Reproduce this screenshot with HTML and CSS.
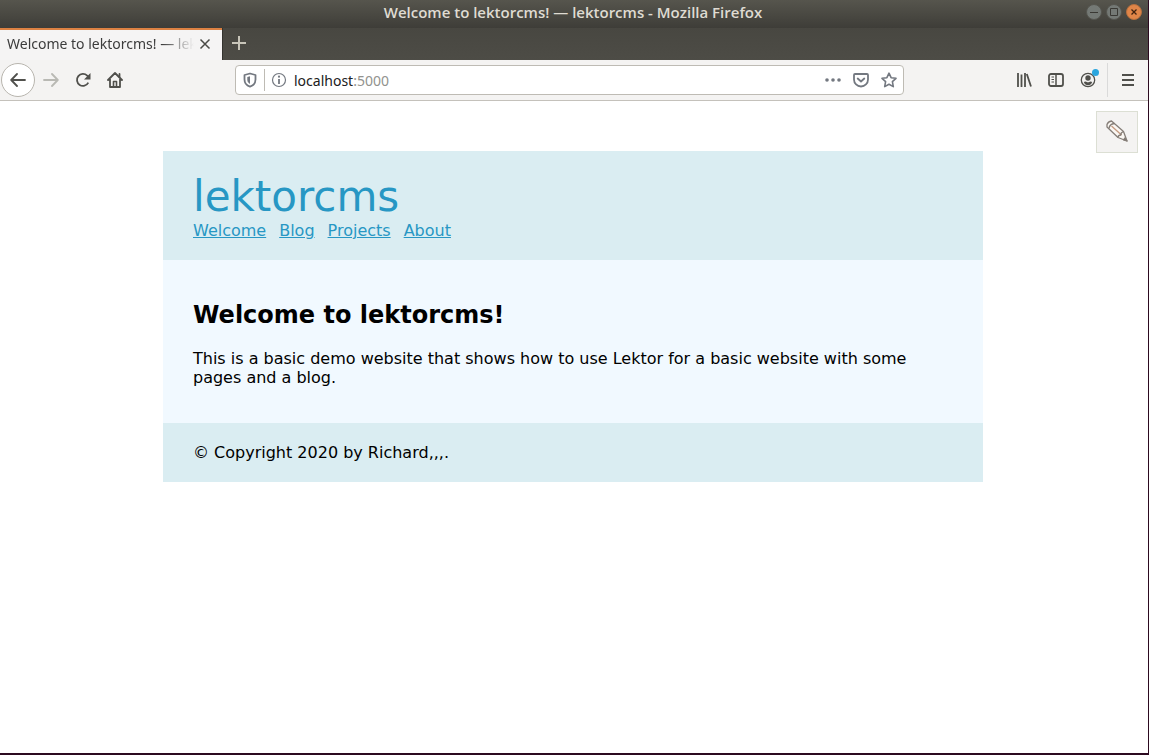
FILE: index.html
```html
<!DOCTYPE html>
<html lang="en">
<head>
<meta charset="utf-8">
<title>Welcome to lektorcms! — lektorcms - Mozilla Firefox</title>
<link rel="stylesheet" href="styles.css">
</head>
<body>
<div class="window">
  <div class="titlebar">
    <span class="window-title">Welcome to lektorcms! — lektorcms - Mozilla Firefox</span>
    <div class="window-controls">
      <button class="control" aria-label="Minimize"><svg width="16" height="16" viewBox="0 0 16 16"><circle cx="8" cy="8" r="7.5" fill="#747975" stroke="#55554f"/><path d="M4 8.500h8" stroke="#3a3934"/></svg></button>
      <button class="control" aria-label="Maximize"><svg width="16" height="16" viewBox="0 0 16 16"><circle cx="8" cy="8" r="7.500" fill="#747975" stroke="#55554f"/><path d="M4.500 4.500h7v7h-7z" fill="none" stroke="#3a3934"/></svg></button>
      <button class="control" aria-label="Close window"><svg width="16" height="16" viewBox="0 0 16 16"><circle cx="8" cy="8" r="7.500" fill="#e08548" stroke="#b5703f"/><path d="M5.500 5.500l5 5m0-5l-5 5" stroke="#40220f" stroke-width="1.300"/></svg></button>
    </div>
  </div>
  <div class="tabbar">
    <div class="tab">
      <span class="tab-label">Welcome to lektorcms! — lektorcms</span>
      <button class="tab-close" aria-label="Close tab"><svg width="12" height="12" viewBox="0 0 12 12"><path d="M1.500 1.500l9 9m0-9l-9 9" stroke="#4a4a46" stroke-width="1.500"/></svg></button>
    </div>
    <button class="new-tab" aria-label="New tab"><svg width="14" height="14" viewBox="0 0 14 14"><path d="M7 0v14M0 7h14" stroke="#c8c5b9" stroke-width="2"/></svg></button>
  </div>
  <div class="toolbar">
    <div class="nav-buttons">
      <button class="back" aria-label="Back"><svg width="16" height="16" viewBox="0 0 16 16" fill="none" stroke="#50504c" stroke-width="1.800" stroke-linecap="round" stroke-linejoin="round"><path d="M15 8H1.500M7 2L1.200 8L7 14"/></svg></button>
      <button class="tool" aria-label="Forward"><svg width="16" height="16" viewBox="0 0 16 16" fill="none" stroke="#b9b9b4" stroke-width="1.800" stroke-linecap="round" stroke-linejoin="round"><path d="M1 8h13.500M9 2l5.800 6L9 14"/></svg></button>
      <button class="tool" aria-label="Reload"><svg width="16" height="16" viewBox="0 0 16 16"><path d="M13.300 10.700A6 6 0 1 1 12.200 3.600L14 5.500" fill="none" stroke="#50504c" stroke-width="1.800"/><path d="M15.500 1v6.500H9z" fill="#50504c"/></svg></button>
      <button class="tool" aria-label="Home"><svg width="16" height="16" viewBox="0 0 16 16" fill="none" stroke="#50504c" stroke-width="1.800" stroke-linecap="round" stroke-linejoin="round"><path d="M1 8l7-7l7 7M3 7v8h10V7"/><path d="M6.500 14.500V9.500h3v5" stroke-width="1.600"/><path d="M12.500 2v3"/></svg></button>
    </div>
    <div class="urlbar">
      <button class="url-icon shield" aria-label="Tracking protection"><svg width="14" height="16" viewBox="0 0 14 16"><path d="M7 1.500L12.500 3v4.500C12.500 11 10.500 13.500 7 14.700C3.500 13.500 1.500 11 1.500 7.500V3z" fill="none" stroke="#737880" stroke-width="1.800" stroke-linejoin="round"/><path d="M7 4.300v7.600C5 10.800 4.300 9.500 4.300 7.500V5z" fill="#737880"/></svg></button>
      <button class="url-icon info" aria-label="Site information"><svg width="16" height="16" viewBox="0 0 16 16"><circle cx="8" cy="8" r="6.500" fill="none" stroke="#737880" stroke-width="1.200"/><path d="M8 7v5" stroke="#737880" stroke-width="1.800"/><circle cx="8" cy="4.700" r="1.100" fill="#737880"/></svg></button>
      <span class="address">localhost<span class="port">:5000</span></span>
      <div class="page-actions">
        <button class="url-icon" aria-label="Page actions"><svg width="16" height="16" viewBox="0 0 16 16" fill="#737880"><circle cx="2" cy="8" r="1.800"/><circle cx="8" cy="8" r="1.800"/><circle cx="14" cy="8" r="1.800"/></svg></button>
        <button class="url-icon" aria-label="Save to Pocket"><svg width="16" height="16" viewBox="0 0 16 16" fill="none" stroke="#737880" stroke-width="1.800" stroke-linecap="round" stroke-linejoin="round"><path d="M2 2h12q1 0 1 1v4.500a7 7 0 0 1-14 0V3q0-1 1-1z"/><path d="M4.700 6.500L8 9.500l3.300-3"/></svg></button>
        <button class="url-icon" aria-label="Bookmark"><svg width="16" height="16" viewBox="0 0 16 16"><path d="M8 1.200l2.100 4.500l4.900.6l-3.600 3.400l.9 4.900L8 12.200l-4.300 2.400l.9-4.900L1 6.300l4.900-.6z" fill="none" stroke="#737880" stroke-width="1.600" stroke-linejoin="round"/></svg></button>
      </div>
    </div>
    <div class="tools">
      <button class="tool" aria-label="Library"><svg width="16" height="16" viewBox="0 0 16 16" stroke="#50504c" stroke-width="1.800"><path d="M2 1v14M5.500 2.500V15M9 1v14M10.800 2l4.200 12.500"/></svg></button>
      <button class="tool" aria-label="Sidebar"><svg width="16" height="16" viewBox="0 0 16 16" fill="none" stroke="#50504c"><rect x="1" y="2" width="14" height="12" rx="2" stroke-width="1.800"/><path d="M8 2v12" stroke-width="1.500"/><path d="M3.500 5H6M3.500 7.500H6M3.500 10H6"/></svg></button>
      <button class="tool account" aria-label="Account"><svg width="16" height="16" viewBox="0 0 16 16"><circle cx="8" cy="8" r="6.700" fill="none" stroke="#50504c" stroke-width="1.300"/><circle cx="8" cy="6" r="2.700" fill="#50504c"/><path d="M3.800 10q1.500-.8 2.500-.2q1.700 1 3.400 0q1-.6 2.500.2Q11 13.200 8 13.200T3.800 10z" fill="#50504c"/></svg><span class="badge"></span></button>
      <button class="menu" aria-label="Menu"><svg width="12" height="14" viewBox="0 0 12 14" stroke="#50504c" stroke-width="2"><path d="M0 2h12M0 7h12M0 12h12"/></svg></button>
    </div>
  </div>
  <div class="viewport">
    <button class="edit" aria-label="Edit page"><svg width="22" height="22" viewBox="0 0 22 22" fill="none" stroke="#857e78" stroke-width="1.300" stroke-linejoin="round"><path d="M1 4.500Q2 1.500 5.500 1l12 10.500l3.500 9.500l-9-3.500L1 7z" fill="#faf7f3"/><path d="M3 8.500Q3.500 4 8.500 3.500" /><path d="M5.500 6l10 9" stroke="#c59a80"/><path d="M12 17.500q0-2.300 2.800-2.500q-.2-2.500 2.700-3.500"/><path d="M19 18l2 3l-3.500-1.200z" fill="#656059"/></svg></button>
    <div class="page">
      <header class="site-header">
        <h1>lektorcms</h1>
        <nav class="site-nav">
          <a href="#welcome">Welcome</a>
          <a href="#blog">Blog</a>
          <a href="#projects">Projects</a>
          <a href="#about">About</a>
        </nav>
      </header>
      <main class="content" id="welcome">
        <h2>Welcome to lektorcms!</h2>
        <p>This is a basic demo website that shows how to use Lektor for a basic website with some pages and a blog.</p>
      </main>
      <footer class="site-footer">© Copyright 2020 by Richard,,,.</footer>
    </div>
  </div>
</div>
</body>
</html>
```

FILE: styles.css
```css
* {
  box-sizing: border-box;
}

body {
  margin: 0;
  background: #ffffff;
  font-family: "DejaVu Sans", sans-serif;
  font-size: 16px;
}

button {
  display: flex;
  align-items: center;
  justify-content: center;
  flex: none;
  padding: 0;
  border: 0;
  background: none;
}

svg {
  display: block;
}

.window {
  display: flex;
  flex-direction: column;
  min-height: 100vh;
  border-right: 1px solid #2c0a20;
  border-bottom: 2px solid #2c0a20;
}

.titlebar {
  display: grid;
  grid-template-columns: 1fr auto 1fr;
  align-items: center;
  height: 28px;
  padding: 0 6px 4px 4px;
  background: linear-gradient(#56554d, #3e3d38);
}

.window-title {
  grid-column: 2;
  color: #dfdbd2;
  font: 600 15px/20px "Open Sans", "Noto Sans", sans-serif;
}

.window-controls {
  display: flex;
  justify-content: flex-end;
  gap: 4px;
}

.tabbar {
  display: flex;
  height: 32px;
  background: linear-gradient(#484741, #4d4c46);
}

.tab {
  display: flex;
  align-items: center;
  width: 222px;
  padding: 0 10px 2px 7px;
  border-top: 2px solid #dd8243;
  background: #f5f4f4;
}

.tab-label {
  flex: 1;
  overflow: hidden;
  margin-right: 4px;
  color: #3c3c3c;
  font: 14px/20px "Noto Sans", sans-serif;
  white-space: nowrap;
  mask-image: linear-gradient(to left, transparent, #000000 32px);
}

.tab-close {
  width: 14px;
  height: 20px;
}

.new-tab {
  width: 32px;
  padding-bottom: 2px;
  border-left: 1px solid #34332f;
}

.toolbar {
  display: flex;
  align-items: center;
  height: 41px;
  border-bottom: 1px solid #c4c1bb;
  background: #f4f3f2;
}

.nav-buttons,
.tools {
  display: flex;
  align-items: center;
}

.nav-buttons {
  padding-left: 1px;
}

.back {
  width: 34px;
  height: 34px;
  border: 1px solid #b8b5ae;
  border-radius: 50%;
  background: #ffffff;
}

.tool {
  width: 32px;
  height: 32px;
}

.urlbar {
  display: flex;
  flex: 1;
  align-items: center;
  height: 30px;
  margin: 0 104px;
  padding: 0 6px;
  border: 1px solid #bebbb4;
  border-radius: 4px;
  background: #ffffff;
}

.url-icon {
  width: 16px;
  height: 22px;
}

.shield {
  width: 23px;
  padding-right: 7px;
  border-right: 1px solid #bebbb4;
}

.info {
  margin-left: 6px;
}

.address {
  flex: 1;
  margin-left: 7px;
  padding-top: 2px;
  color: #202020;
  font: 14px/20px "Noto Sans", sans-serif;
}

.port {
  color: #92928e;
}

.page-actions {
  display: flex;
  gap: 12px;
}

.account {
  position: relative;
}

.badge {
  position: absolute;
  top: 5px;
  right: 5px;
  width: 7px;
  height: 7px;
  border-radius: 50%;
  background: #2aa5de;
}

.menu {
  width: 41px;
  height: 34px;
  margin-left: 3px;
  border-left: 1px solid #dadada;
}

.viewport {
  position: relative;
  flex: 1;
  padding: 50px 22px 50px 20px;
}

.edit {
  position: absolute;
  top: 10px;
  right: 10px;
  width: 42px;
  height: 42px;
  padding-bottom: 3px;
  border: 1px solid #dcdfd4;
  background: #f4f3f2;
}

.page {
  max-width: 820px;
  margin: 0 auto;
}

.site-header,
.site-footer {
  padding: 20px 30px;
  background: #daedf2;
}

.site-header h1 {
  margin: 0;
  color: #2797c4;
  font-size: 42px;
  font-weight: normal;
  line-height: 50px;
}

.site-header h1 {
  padding-top: 1px;
  line-height: 49px;
}

.site-nav {
  display: flex;
  flex-wrap: wrap;
  gap: 13px;
  line-height: 19px;
}

.site-nav a {
  color: #2797c4;
}

.content {
  padding: 41px 30px 36px;
  background: #f1f9ff;
  color: #000000;
}

.content h2 {
  margin: 0 0 19px;
  font-size: 24px;
  line-height: 29px;
}

.content p {
  margin: 0;
  line-height: 19px;
}

.site-footer {
  line-height: 19px;
}
```
